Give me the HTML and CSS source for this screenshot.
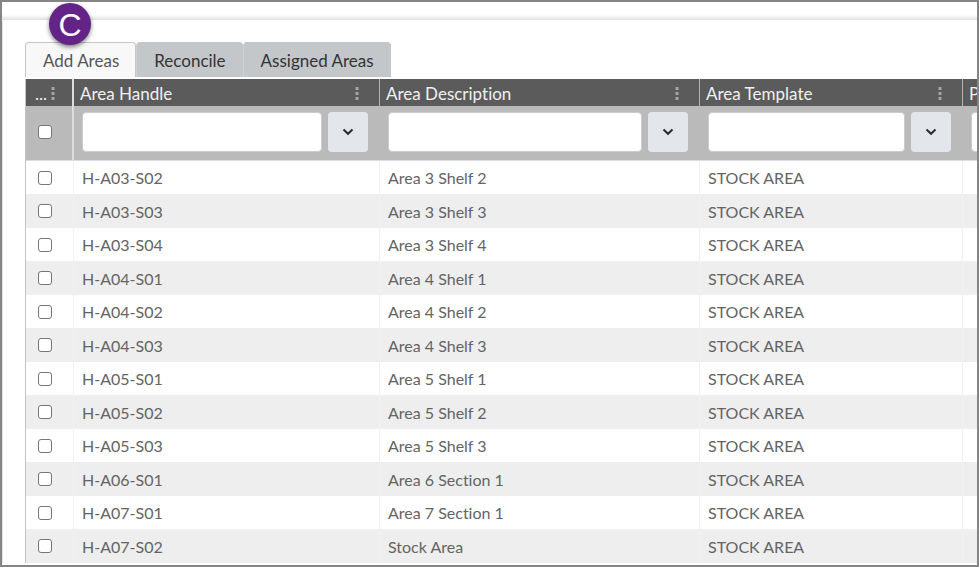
FILE: index.html
```html
<!DOCTYPE html>
<html lang="en">
<head>
    <meta charset="UTF-8">
    <meta name="viewport" content="width=device-width, initial-scale=1.0">
    <title>Add Areas</title>
    <link rel="stylesheet" href="styles.css">
</head>
<body>
    <div class="window">
        <div class="top-bar"></div>
        <div class="marker">C</div>
        <main class="panel">
            <div class="tabs" role="tablist">
                <button class="tab active" role="tab" aria-selected="true">Add Areas</button>
                <button class="tab" role="tab" aria-selected="false">Reconcile</button>
                <button class="tab" role="tab" aria-selected="false">Assigned Areas</button>
            </div>
            <div class="grid">
                <table>
                    <colgroup>
                        <col class="col-check">
                        <col class="col-handle">
                        <col class="col-description">
                        <col class="col-template">
                        <col class="col-last">
                    </colgroup>
                    <thead>
                        <tr class="titles">
                            <th><div class="title">...<button class="menu" aria-label="Column menu"><svg viewBox="0 0 4 16"><path d="M.5 1h3v3h-3zM.5 6h3v3h-3zM.5 11h3v3h-3z"/></svg></button></div></th>
                            <th><div class="title">Area Handle<button class="menu" aria-label="Column menu"><svg viewBox="0 0 4 16"><path d="M.5 1h3v3h-3zM.5 6h3v3h-3zM.5 11h3v3h-3z"/></svg></button></div></th>
                            <th><div class="title">Area Description<button class="menu" aria-label="Column menu"><svg viewBox="0 0 4 16"><path d="M.5 1h3v3h-3zM.5 6h3v3h-3zM.5 11h3v3h-3z"/></svg></button></div></th>
                            <th><div class="title">Area Template<button class="menu" aria-label="Column menu"><svg viewBox="0 0 4 16"><path d="M.5 1h3v3h-3zM.5 6h3v3h-3zM.5 11h3v3h-3z"/></svg></button></div></th>
                            <th><div class="title">P</div></th>
                        </tr>
                        <tr class="filters">
                            <td class="check"><input type="checkbox" aria-label="Select all"></td>
                            <td><div class="filter"><input type="text" aria-label="Filter Area Handle"><button class="operator" aria-label="Filter type"><svg viewBox="0 0 12 8"><path d="M1.5 1.5 6 5.8 10.5 1.5"/></svg></button></div></td>
                            <td><div class="filter"><input type="text" aria-label="Filter Area Description"><button class="operator" aria-label="Filter type"><svg viewBox="0 0 12 8"><path d="M1.5 1.5 6 5.8 10.5 1.5"/></svg></button></div></td>
                            <td><div class="filter"><input type="text" aria-label="Filter Area Template"><button class="operator" aria-label="Filter type"><svg viewBox="0 0 12 8"><path d="M1.5 1.5 6 5.8 10.5 1.5"/></svg></button></div></td>
                            <td><div class="filter"><input type="text" aria-label="Filter"></div></td>
                        </tr>
                    </thead>
                    <tbody>
                        <tr><td class="check"><input type="checkbox" aria-label="Select H-A03-S02"></td><td>H-A03-S02</td><td>Area 3 Shelf 2</td><td>STOCK AREA</td><td></td></tr>
                        <tr><td class="check"><input type="checkbox" aria-label="Select H-A03-S03"></td><td>H-A03-S03</td><td>Area 3 Shelf 3</td><td>STOCK AREA</td><td></td></tr>
                        <tr><td class="check"><input type="checkbox" aria-label="Select H-A03-S04"></td><td>H-A03-S04</td><td>Area 3 Shelf 4</td><td>STOCK AREA</td><td></td></tr>
                        <tr><td class="check"><input type="checkbox" aria-label="Select H-A04-S01"></td><td>H-A04-S01</td><td>Area 4 Shelf 1</td><td>STOCK AREA</td><td></td></tr>
                        <tr><td class="check"><input type="checkbox" aria-label="Select H-A04-S02"></td><td>H-A04-S02</td><td>Area 4 Shelf 2</td><td>STOCK AREA</td><td></td></tr>
                        <tr><td class="check"><input type="checkbox" aria-label="Select H-A04-S03"></td><td>H-A04-S03</td><td>Area 4 Shelf 3</td><td>STOCK AREA</td><td></td></tr>
                        <tr><td class="check"><input type="checkbox" aria-label="Select H-A05-S01"></td><td>H-A05-S01</td><td>Area 5 Shelf 1</td><td>STOCK AREA</td><td></td></tr>
                        <tr><td class="check"><input type="checkbox" aria-label="Select H-A05-S02"></td><td>H-A05-S02</td><td>Area 5 Shelf 2</td><td>STOCK AREA</td><td></td></tr>
                        <tr><td class="check"><input type="checkbox" aria-label="Select H-A05-S03"></td><td>H-A05-S03</td><td>Area 5 Shelf 3</td><td>STOCK AREA</td><td></td></tr>
                        <tr><td class="check"><input type="checkbox" aria-label="Select H-A06-S01"></td><td>H-A06-S01</td><td>Area 6 Section 1</td><td>STOCK AREA</td><td></td></tr>
                        <tr><td class="check"><input type="checkbox" aria-label="Select H-A07-S01"></td><td>H-A07-S01</td><td>Area 7 Section 1</td><td>STOCK AREA</td><td></td></tr>
                        <tr><td class="check"><input type="checkbox" aria-label="Select H-A07-S02"></td><td>H-A07-S02</td><td>Stock Area</td><td>STOCK AREA</td><td></td></tr>
                    </tbody>
                </table>
            </div>
        </main>
    </div>
</body>
</html>
```
FILE: styles.css
```css
* {
    box-sizing: border-box;
}
body {
    margin: 0;
    font-family: Lato, "Liberation Sans", sans-serif;
    font-size: 16px;
    font-variant-ligatures: none;
    color: #646464;
    background-color: white;
}
button {
    font: inherit;
    color: inherit;
    border: none;
    padding: 0;
    cursor: pointer;
}
.window {
    position: relative;
    height: 100vh;
    border: 2px solid #858585;
    overflow: hidden;
}
.top-bar {
    height: 18px;
    background: linear-gradient(white 13px, #e0e0e0);
}
.marker {
    position: absolute;
    top: 1px;
    left: 47px;
    width: 42px;
    height: 42px;
    border-radius: 50%;
    background-color: #642387;
    box-shadow: 0 2px 4px rgba(0,0,0,0.5);
    color: white;
    font-family: "Liberation Sans", Arial, sans-serif;
    font-size: 32px;
    line-height: 44px;
    text-align: center;
}
.panel {
    padding: 22px 0 0 22px;
    border-left: 1px solid #e4e4e4;
    border-top-left-radius: 4px;
}
.tabs {
    display: flex;
    margin-bottom: 2px;
}
.tab {
    height: 35px;
    padding: 0 16px 0 17px;
    border: 1px solid #c3c7ca;
    border-bottom: none;
    border-radius: 4px 4px 0 0;
    background-color: #c3c7ca;
    color: #333;
    font-size: 17px;
}
.tab + .tab {
    border-left-color: #ced2d5;
}
.tab.active {
    background-color: #f8f8f8;
    color: #555;
}
.grid {
    border-left: 1px solid #c3c3c3;
    overflow: hidden;
}
table {
    table-layout: fixed;
    width: 1300px;
    border-collapse: separate;
    border-spacing: 0;
}
.col-check {
    width: 48px;
}
.col-handle {
    width: 306px;
}
.col-description {
    width: 320px;
}
.col-template {
    width: 263px;
}
th,
td {
    padding: 0 8px;
    text-align: left;
}
.titles th {
    height: 27px;
    padding: 2px 6px 0;
    border-right: 1px solid #b5b5b5;
    background-color: #5b5b5b;
    color: #f0f0f0;
    font-size: 17px;
    font-weight: normal;
}
.titles th:first-child {
    padding: 2px 9px 0;
    border-right: 2px solid #ddd;
}
.title {
    display: flex;
    align-items: center;
    justify-content: space-between;
}
.menu {
    margin-right: 14px;
    background: none;
}
.menu svg {
    display: block;
    width: 4px;
    height: 16px;
    fill: #a4a4a4;
}
th:first-child .menu {
    margin-right: 8px;
}
.filters td {
    height: 55px;
    padding-top: 6px;
    background-color: #bababa;
    border-bottom: 1px solid #dcdce4;
    vertical-align: top;
}
.filters .check {
    padding: 0 12px 2px;
    border-right: 2px solid #ddd;
    vertical-align: middle;
}
.filter {
    display: flex;
    gap: 6px;
    padding-right: 4px;
}
.filter input {
    flex: 1;
    min-width: 0;
    height: 40px;
    padding: 0 8px;
    border: 1px solid #ccc;
    border-radius: 4px;
    font: inherit;
}
.operator {
    display: flex;
    align-items: center;
    justify-content: center;
    width: 40px;
    height: 40px;
    border-radius: 4px;
    background-color: #e3e7eb;
}
.operator svg {
    width: 12px;
    height: 8px;
    fill: none;
    stroke: #2b2b2b;
    stroke-width: 2;
}
tbody td {
    height: 33px;
    border-right: 1px solid #f0f0f5;
}
tbody tr:nth-child(even) td {
    height: 34px;
    background-color: #eee;
}
.check,
tbody .check {
    padding: 0 12px;
}
.check input {
    appearance: none;
    display: block;
    width: 14px;
    height: 14px;
    margin: 0;
    border: 1px solid #767676;
    border-radius: 3px;
    background-color: white;
}
.check input:checked {
    background-color: #642387;
}
```
